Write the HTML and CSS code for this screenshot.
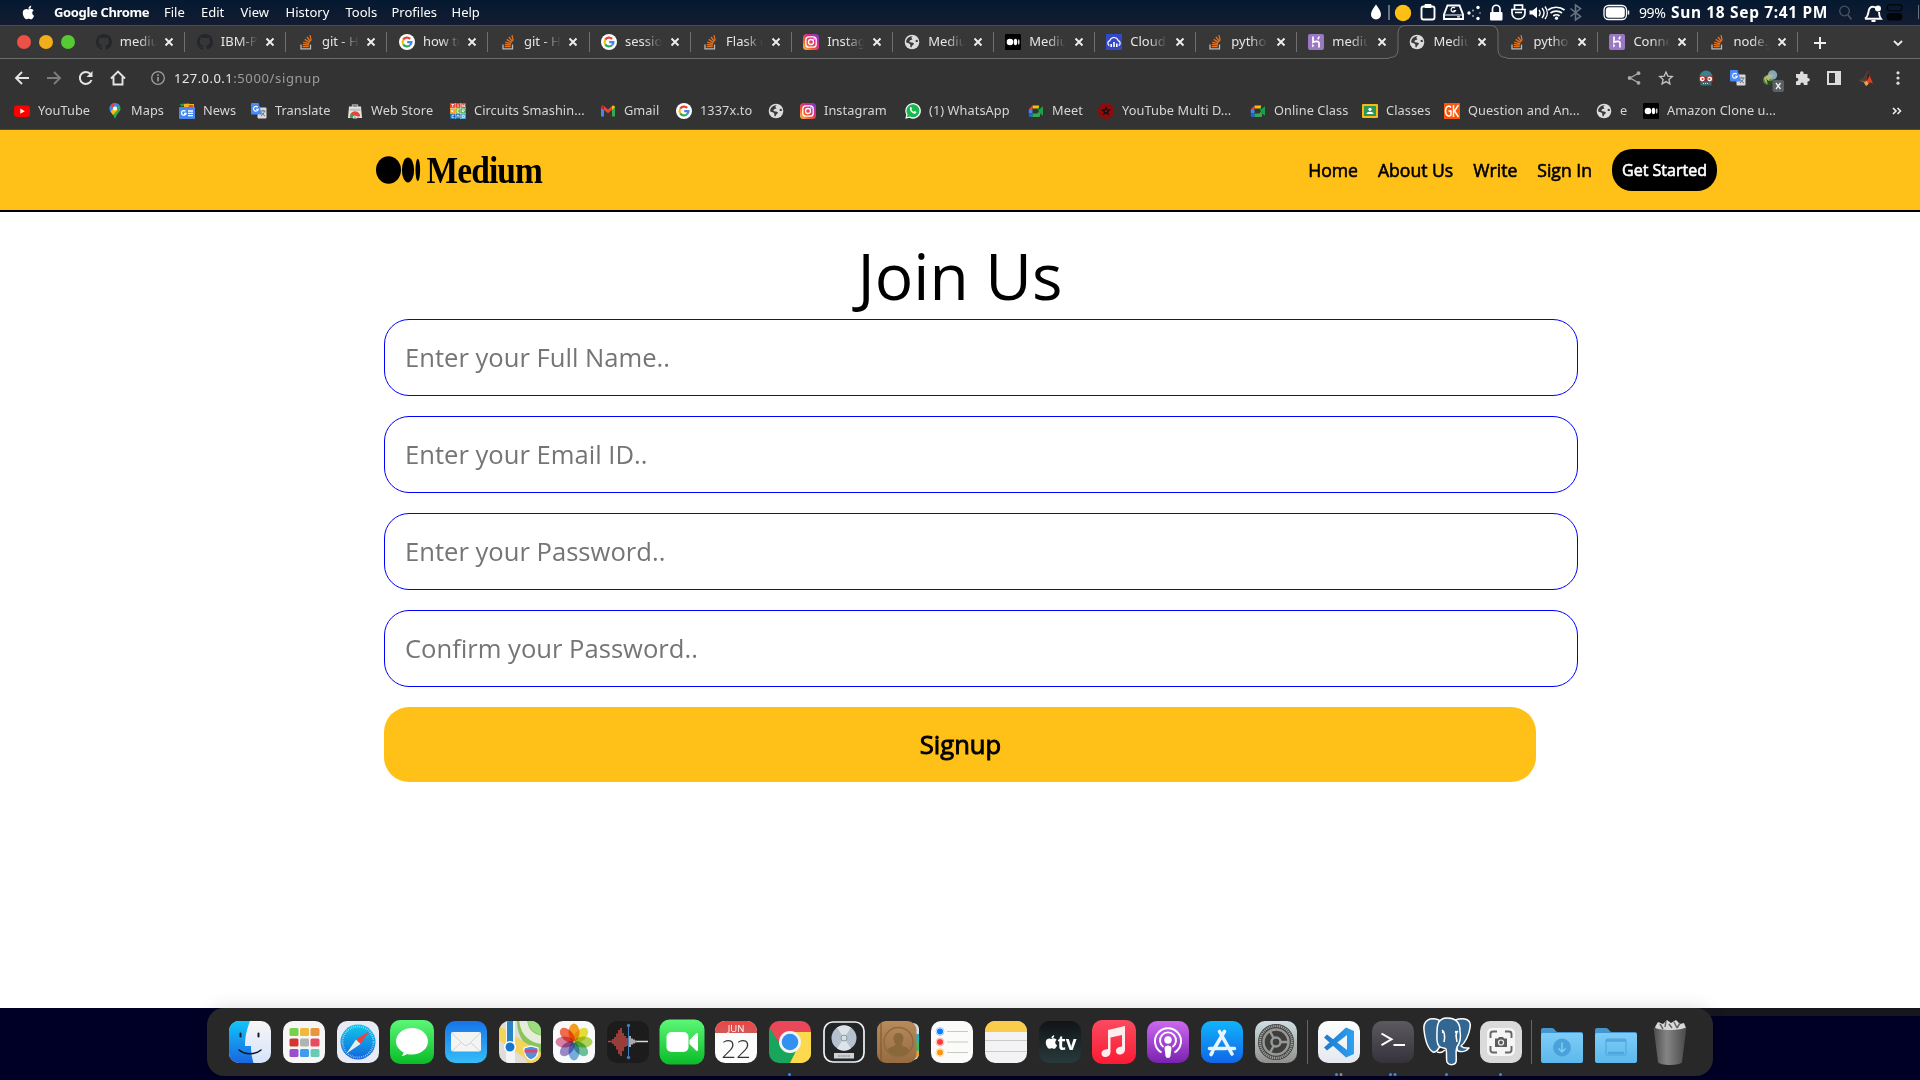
FILE: index.html
```html
<!DOCTYPE html>
<html lang="en">
<head>
<meta charset="utf-8">
<title>Medium</title>
<link rel="stylesheet" href="styles.css">
</head>
<body>
<svg class="defs" width="0" height="0" aria-hidden="true">
  <defs>
    <linearGradient id="gGreen" x2="0" y2="1"><stop offset="0" stop-color="#5cf777"/><stop offset="1" stop-color="#09bc28"/></linearGradient>
    <linearGradient id="gWhite" x2="0" y2="1"><stop offset="0" stop-color="#ffffff"/><stop offset="1" stop-color="#e4e8ee"/></linearGradient>
    <linearGradient id="gMail" x2="0" y2="1"><stop offset="0" stop-color="#1674e8"/><stop offset="1" stop-color="#36bdf8"/></linearGradient>
    <linearGradient id="gSaf" x2="0" y2="1"><stop offset="0" stop-color="#0fc8ea"/><stop offset="1" stop-color="#1465dc"/></linearGradient>
    <linearGradient id="gFind" x2="0" y2="1"><stop offset="0" stop-color="#12c4f8"/><stop offset="1" stop-color="#1a66e0"/></linearGradient>
    <linearGradient id="gFace" x2="0" y2="1"><stop offset="0" stop-color="#f8f5f6"/><stop offset="1" stop-color="#d4e4fb"/></linearGradient>
    <linearGradient id="gMusic" x2="0" y2="1"><stop offset="0" stop-color="#fb4a60"/><stop offset="1" stop-color="#fa1b34"/></linearGradient>
    <linearGradient id="gPod" x2="0" y2="1"><stop offset="0" stop-color="#cc68f0"/><stop offset="1" stop-color="#7a22b0"/></linearGradient>
    <linearGradient id="gStore" x2="0" y2="1"><stop offset="0" stop-color="#10b4fc"/><stop offset="1" stop-color="#1066e8"/></linearGradient>
    <linearGradient id="gTv" x2="0" y2="1"><stop offset="0" stop-color="#101416"/><stop offset="1" stop-color="#283a3c"/></linearGradient>
    <linearGradient id="gTerm" x2="0" y2="1"><stop offset="0" stop-color="#5c5960"/><stop offset="1" stop-color="#35323b"/></linearGradient>
    <linearGradient id="gSet" x2="0" y2="1"><stop offset="0" stop-color="#cfdfe4"/><stop offset="1" stop-color="#90908c"/></linearGradient>
    <linearGradient id="gCon" x2="0" y2="1"><stop offset="0" stop-color="#b88a5c"/><stop offset="1" stop-color="#966c40"/></linearGradient>
    <linearGradient id="gCal" x2="0" y2="1"><stop offset="0" stop-color="#f04444"/><stop offset="1" stop-color="#cf5a58"/></linearGradient>
    <linearGradient id="gFold" x2="0" y2="1"><stop offset="0" stop-color="#7ecdf8"/><stop offset="1" stop-color="#5cb8ec"/></linearGradient>
    <linearGradient id="gTrash"><stop offset="0" stop-color="#4c4c4c"/><stop offset=".4" stop-color="#858585"/><stop offset="1" stop-color="#484848"/></linearGradient>
    <linearGradient id="gCode"><stop offset="0" stop-color="#1d7ad0"/><stop offset="1" stop-color="#2fa0f0"/></linearGradient>
    <linearGradient id="gInsta" x1="0" y1="1" x2="1" y2="0"><stop offset="0" stop-color="#fdc94c"/><stop offset=".35" stop-color="#f6542f"/><stop offset=".65" stop-color="#cf2c8e"/><stop offset="1" stop-color="#6a3fd0"/></linearGradient>
    <clipPath id="round"><rect width="42" height="42" rx="10"/></clipPath>
  </defs>
  <symbol id="apple" viewBox="0 0 24 24"><path d="M18.7 12.7c0-2.5 2-3.700 2.100-3.800-1.200-1.700-3-1.900-3.600-2-1.500-.2-3 .9-3.800.9s-2-.9-3.200-.9c-1.700 0-3.200 1-4.100 2.400-1.700 3-.4 7.500 1.300 9.900.8 1.200 1.800 2.500 3.100 2.500 1.200-.1 1.700-.8 3.200-.8s1.900.8 3.200.8c1.400 0 2.200-1.200 3-2.400.9-1.400 1.300-2.700 1.300-2.800-.1 0-2.500-1-2.500-3.800zM16.200 5.500c.7-.8 1.200-2 1-3.200-1 0-2.200.7-2.900 1.500-.6.700-1.200 1.900-1 3 1.100.1 2.200-.5 2.900-1.300z" fill="currentColor"/></symbol>
  <symbol id="github" viewBox="0 0 16 16"><path d="M8 0C3.580 0 0 3.580 0 8c0 3.540 2.290 6.530 5.470 7.590.4.070.55-.17.55-.38v-1.490c-2.010.37-2.690-.49-2.690-.94-.5-.94-1.100-1.200-1.100-1.200-.7-.5.1-.5.1-.5.8.1 1.200.8 1.200.8.72 1.210 1.870.87 2.330.66.070-.52.28-.87.51-1.070-1.780-.2-3.640-.89-3.640-3.950 0-.87.31-1.590.82-2.150-.08-.2-.36-1.020.08-2.120 0 0 .67-.21 2.200.82a7.600 7.600 0 014 0c1.530-1.040 2.200-.82 2.200-.82.44 1.100.16 1.920.08 2.120.51.560.82 1.270.82 2.150 0 3.070-1.870 3.750-3.650 3.950.29.250.54.730.54 1.480v2.190c0 .21.150.46.550.38A8.010 8.010 0 0016 8c0-4.420-3.580-8-8-8z" fill="#23272c"/></symbol>
  <symbol id="so" viewBox="0 0 16 16"><path d="M3 10.500v4.300h9.500v-4.300" fill="none" stroke="#b8bbc0" stroke-width="1.300"/><path d="M4.700 12.700h6M4.800 10.500l6 .6M5.300 8.100l5.700 1.700M6.700 5.400l5 3.200M9 3l3.500 4.700M12 1.200l1.200 5.500" stroke="#e8711a" stroke-width="1.300"/></symbol>
  <symbol id="google" viewBox="0 0 16 16"><circle cx="8" cy="8" r="8" fill="#fff"/><g fill="none" stroke-width="2.200"><path d="M4.200 5.700A4.500 4.500 0 0111.200 4.900" stroke="#ea4335"/><path d="M4.200 10.300a4.500 4.500 0 010-4.600" stroke="#fbbc05"/><path d="M11 11.300a4.500 4.500 0 01-6.800-1" stroke="#34a853"/><path d="M8.200 8.100h4.200A4.600 4.600 0 0111 11.300" stroke="#4285f4"/></g></symbol>
  <symbol id="insta" viewBox="0 0 16 16"><rect width="16" height="16" rx="3.500" fill="url(#gInsta)"/><g fill="none" stroke="#fff" stroke-width="1.300"><rect x="2.800" y="2.800" width="10.400" height="10.400" rx="3"/><circle cx="8" cy="8" r="2.500"/></g><circle cx="11" cy="5" r=".8" fill="#fff"/></symbol>
  <symbol id="globe" viewBox="0 0 16 16"><circle cx="8" cy="8" r="7.300" fill="#dcdcdc"/><path d="M8.800 2.300C7 3 7 4.600 8.600 5.200 7.500 6.200 5.600 5.800 5.500 7.400c.3 1.400 3.500.6 4.300 1.800.4 1.300-1.200 1.600-1.600 2.600l-.8 1.800c-1-.4-1.200-1-1-2.200C6.500 9.800 4.500 9.300 2.200 8.600c-.3-2 .8-4 2.300-5.100 1.300-.9 2.800-1.300 4.300-1.200zM13.500 5.800c-1.300-.2-2.400.6-1.900 1.700.4.700 1.500.7 2.200.5.100-.8 0-1.500-.3-2.200z" fill="#3a3a3a"/></symbol>
  <symbol id="medium" viewBox="0 0 16 16"><rect width="16" height="16" rx="1" fill="#000"/><circle cx="5" cy="8" r="3.300" fill="#fff"/><ellipse cx="10.500" cy="8" rx="1.700" ry="3.200" fill="#fff"/><ellipse cx="13.700" cy="8" rx=".9" ry="2.800" fill="#ccc"/></symbol>
  <symbol id="cloud" viewBox="0 0 16 16"><rect width="16" height="16" fill="#3448c5"/><path d="M3.300 11.600a2.700 2.700 0 01.5-5 4.400 4.400 0 018.400 0 2.700 2.700 0 01.5 5" fill="none" stroke="#fff" stroke-width="1.200"/><path d="M5.200 13V10M8 13V8M10.800 13V9.500" stroke="#fff" stroke-width="1.600"/></symbol>
  <symbol id="heroku" viewBox="0 0 16 16"><rect width="16" height="16" rx="2" fill="#9a78c4"/><path d="M5 2.500v5.800c2.500-1.200 6-1.600 6 .8v4.400M11 2.500c0 1.300-.5 2-1.200 2.800" fill="none" stroke="#fff" stroke-width="1.700"/><path d="M4.200 9.800l2.200 1.900-2.200 1.900z" fill="#fff"/></symbol>
  <symbol id="close" viewBox="0 0 10 10"><path d="M1.500 1.500l7 7M8.500 1.500l-7 7" stroke="#eee" stroke-width="1.900"/></symbol>
  <symbol id="trans" viewBox="0 0 16 16"><rect x="6.500" y="4.500" width="9" height="11" rx="1" fill="#dadada"/><path d="M9.500 8h5M12 6.800V8M13.500 8c-.5 2.500-2 4-3.500 5M10.500 9.500c.8 1.500 2 2.700 3.500 3.500" stroke="#69787f" fill="none"/><path d="M1 0h6.500l3.500 11.500H1a1 1 0 01-1-1V1a1 1 0 011-1z" fill="#4a8af4"/><path d="M6.800 4.200A2.400 2.400 0 107.300 6.200H5" stroke="#fff" fill="none" stroke-width="1.100"/></symbol>
  <symbol id="meet" viewBox="0 0 16 16"><path d="M4.500 2.500H11v3H4.500z" fill="#fbbc04"/><path d="M.8 6.200l3.700-3.700v3.700z" fill="#ea4335"/><path d="M.8 6.200h3.700v4H.8z" fill="#4285f4"/><path d="M.8 10.200h3.700V14H1.800a1 1 0 01-1-1z" fill="#1967d2"/><path d="M4.500 10.500H9L12 8v5a1 1 0 01-1 1H4.500z" fill="#34a853"/><path d="M10 5.500V4l1 1v1.500l4-3.200v9.500l-4-3z" fill="#18a245"/></symbol>
</svg>

<header class="menubar">
  <nav class="menus">
    <svg class="apple"><use href="#apple"/></svg>
    <b>Google Chrome</b><span>File</span><span>Edit</span><span>View</span><span>History</span><span>Tools</span><span>Profiles</span><span>Help</span>
  </nav>
  <div class="tray">
    <svg viewBox="0 0 250 24" class="trayicons">
      <path d="M11 4.500c2.300 3.500 5 6.500 5 10a5 5 0 01-10 0c0-3.500 2.700-6.500 5-10z" fill="#fff"/>
      <path d="M24 5v15" stroke="#c8ccd2"/><circle cx="38" cy="13" r="8.200" fill="#fdbf13"/>
      <g fill="none" stroke="#fff" stroke-width="1.900"><rect x="56.500" y="6.500" width="13" height="13" rx="2"/><rect x="59.500" y="4" width="7" height="4" rx="1" fill="#fff" stroke="none"/>
      <path d="M82.500 5.500h12l3.500 9v4.500h-19v-4.500z"/><path d="M79.500 15h18M92 16.800h3M90 8a2.300 2.300 0 10.500 2.600h-2" stroke-width="1.200"/></g>
      <g fill="#fff"><circle cx="104" cy="13" r="1.700"/><circle cx="108" cy="10.500" r=".9" opacity=".7"/><circle cx="113" cy="7.500" r="1.700"/><circle cx="108" cy="16" r=".9" opacity=".7"/><circle cx="113" cy="18.500" r="1.700"/><circle cx="115" cy="13" r=".9" opacity=".5"/>
      <rect x="125" y="12" width="12.500" height="8.500" rx="1"/></g>
      <g fill="none" stroke="#fff" stroke-width="1.700"><path d="M127.500 12V9a3.500 3.500 0 017.500 0v3M149.500 9V5.200h8V9M147 9.500h13v3.500a6 6 0 01-6 6h-1a6 6 0 01-6-6zM150 12.500h7"/>
      <path d="M174 10c1.500 2 1.500 4 0 6M177 8c2.500 3 2.500 7 0 10M180 6.500c3 4 3 9 0 12.500" stroke-width="1.400"/><path d="M183 10a11.500 9 0 0116.500 0M185.500 13a8 6 0 0111.500 0M188.300 16a4.200 3.500 0 016.200 0"/></g>
      <path d="M164.500 10.500h3l4.500-3.500v11l-4.500-3.500h-3z" fill="#fff"/><circle cx="191.500" cy="18.200" r="1.600" fill="#fff"/>
      <path d="M205.500 8.500l10 8-5 3.500V5l5 3.500-10 8" fill="none" stroke="#687482" stroke-width="1.600"/>
    </svg>
    <svg viewBox="0 0 28 24" class="battery"><rect x="1" y="5.500" width="22.500" height="14" rx="4.500" fill="none" stroke="#fff" stroke-width="1.300"/><rect x="2.800" y="7.300" width="19" height="10.400" rx="3" fill="#fff"/><path d="M25.500 10.500v4" stroke="#fff" stroke-width="1.500"/></svg>
    <span class="pct">99%</span>
    <b class="clock">Sun 18 Sep 7:41 PM</b>
    <svg viewBox="0 0 88 24" class="trayend"><circle cx="12.500" cy="11" r="4.800" fill="none" stroke="#4b5664" stroke-width="1.300"/><path d="M16 15l3.500 4.500" stroke="#4b5664" stroke-width="1.500"/><path d="M33 18.800c2.500-2 3-3.500 3.500-7 .4-3 2-5 4.500-5s3 1 3.400 2M47 12c0 3 .5 5 2 6.800H33M39.500 21h4" fill="none" stroke="#fff" stroke-width="1.900"/><circle cx="46" cy="8.500" r="3" fill="#fff"/><rect x="55" y="4.700" width="15" height="6" rx="3" fill="none" stroke="#04080f" stroke-width="1.500"/><rect x="54.500" y="13" width="16" height="7.500" rx="3.700" fill="#02050a"/><path d="M86.500 5v14" stroke="#68727e"/></svg>
  </div>
</header>

<section class="tabstrip">
  <div class="lights"><i class="red"></i><i class="amber"></i><i class="green"></i></div>
  <div class="tabs">
    <div class="tab"><svg><use href="#github"/></svg><span>medium</span><svg class="x"><use href="#close"/></svg></div>
    <div class="tab"><svg><use href="#github"/></svg><span>IBM-Pr</span><svg class="x"><use href="#close"/></svg></div>
    <div class="tab"><svg><use href="#so"/></svg><span>git - Ho</span><svg class="x"><use href="#close"/></svg></div>
    <div class="tab"><svg><use href="#google"/></svg><span>how to</span><svg class="x"><use href="#close"/></svg></div>
    <div class="tab"><svg><use href="#so"/></svg><span>git - Ho</span><svg class="x"><use href="#close"/></svg></div>
    <div class="tab"><svg><use href="#google"/></svg><span>session</span><svg class="x"><use href="#close"/></svg></div>
    <div class="tab"><svg><use href="#so"/></svg><span>Flask c</span><svg class="x"><use href="#close"/></svg></div>
    <div class="tab"><svg><use href="#insta"/></svg><span>Instagr</span><svg class="x"><use href="#close"/></svg></div>
    <div class="tab"><svg><use href="#globe"/></svg><span>Medium</span><svg class="x"><use href="#close"/></svg></div>
    <div class="tab"><svg><use href="#medium"/></svg><span>Medium</span><svg class="x"><use href="#close"/></svg></div>
    <div class="tab"><svg><use href="#cloud"/></svg><span>Cloudin</span><svg class="x"><use href="#close"/></svg></div>
    <div class="tab"><svg><use href="#so"/></svg><span>python</span><svg class="x"><use href="#close"/></svg></div>
    <div class="tab before"><svg><use href="#heroku"/></svg><span>medium</span><svg class="x"><use href="#close"/></svg></div>
    <div class="tab active"><svg class="shape" viewBox="0 0 118 34"><path d="M0 34V32.500h1q8 0 8-8V8.500q0-8 8-8h84q8 0 8 8v16q0 8 8 8h1V34z" fill="#333"/><path d="M0 32.500h1q8 0 8-8V8.500q0-8 8-8h84q8 0 8 8v16q0 8 8 8h1" fill="none" stroke="#6d6d6d"/></svg><svg><use href="#globe"/></svg><span>Medium</span><svg class="x"><use href="#close"/></svg></div>
    <div class="tab"><svg><use href="#so"/></svg><span>python</span><svg class="x"><use href="#close"/></svg></div>
    <div class="tab"><svg><use href="#heroku"/></svg><span>Connec</span><svg class="x"><use href="#close"/></svg></div>
    <div class="tab"><svg><use href="#so"/></svg><span>node.js</span><svg class="x"><use href="#close"/></svg></div>
  </div>
  <svg class="plus" viewBox="0 0 14 14"><path d="M7 1v12M1 7h12" stroke="#eee" stroke-width="2"/></svg>
  <svg class="chev" viewBox="0 0 10 10"><path d="M1 3l4 4 4-4" fill="none" stroke="#eee" stroke-width="1.800"/></svg>
</section>

<section class="toolbar">
  <div class="navicons">
    <svg viewBox="0 0 16 16"><path d="M15 8H2M8 2L2 8l6 6" fill="none" stroke="#e4e4e4" stroke-width="1.900"/></svg>
    <svg viewBox="0 0 16 16"><path d="M1 8h13M8 2l6 6-6 6" fill="none" stroke="#7c7c7c" stroke-width="1.900"/></svg>
    <svg viewBox="0 0 16 16"><path d="M13.500 10A6 6 0 1112.600 4.200" fill="none" stroke="#e4e4e4" stroke-width="2"/><path d="M14.500 1v6h-6z" fill="#e4e4e4"/></svg>
    <svg viewBox="0 0 16 16"><path d="M1 8.500L8 1.500l7 7M3.500 7v7.500h9V7" fill="none" stroke="#e4e4e4" stroke-width="1.900"/></svg>
  </div>
  <svg class="info" viewBox="0 0 16 16"><circle cx="8" cy="8" r="6.300" fill="none" stroke="#9aa0a6" stroke-width="1.300"/><path d="M8 7v4.500M8 4.300V6" stroke="#9aa0a6" stroke-width="1.600"/></svg>
  <p class="url"><span>127.0.0.1</span>:5000/signup</p>
  <div class="exts">
    <svg viewBox="0 0 16 16"><path d="M13 3L4 8l9 5" fill="none" stroke="#a9a9a9" stroke-width="1.300"/><g fill="#a9a9a9"><circle cx="12.500" cy="3.200" r="1.900"/><circle cx="3.600" cy="8" r="1.900"/><circle cx="12.500" cy="12.800" r="1.900"/></g></svg>
    <svg viewBox="0 0 16 16"><path d="M8 2l1.800 4.100 4.500.4-3.400 3 1 4.400L8 11.600l-3.900 2.300 1-4.400-3.400-3 4.500-.4z" fill="none" stroke="#c4c4c4" stroke-width="1.300"/></svg>
    <span></span>
    <svg viewBox="0 0 16 16"><path d="M1.500 7.500a6.500 7 0 0113 0z" fill="#3b8290"/><path d="M2.500 11h11v4.500h-11z" fill="#376f7a"/><circle cx="4.300" cy="9" r="3" fill="#fff" stroke="#a22c22" stroke-width="1.200"/><circle cx="11.700" cy="9" r="3" fill="#fff" stroke="#a22c22" stroke-width="1.200"/><circle cx="4.600" cy="9" r="1.100" fill="#d8382c"/><circle cx="11.400" cy="9" r="1.100" fill="#d8382c"/><path d="M5 13.500h6" stroke="#ddd" stroke-dasharray="1 1"/></svg>
    <svg><use href="#trans"/></svg>
    <svg class="idm" viewBox="0 0 22 22"><circle cx="6" cy="10" r="5" fill="#55803f"/><circle cx="10.500" cy="5" r="4.700" fill="#85a6b8"/><path d="M2 8c3-3 7-5 10-3l-5 5 2 4c-3 1-6-1-7-6z" fill="#b4bd76"/><path d="M4 8c2 4 5 4 8 2v4l-6 1z" fill="#1f4a24"/><rect x="10.500" y="10" width="11.500" height="12" rx="2" fill="#5c6064"/><path d="M14 13l4.500 6M18.500 13L14 19" stroke="#eee" stroke-width="1.300"/></svg>
    <svg viewBox="0 0 16 16"><path d="M2 4h4V3a1.800 1.800 0 013.600 0v1h3.900v4H14a1.800 1.800 0 010 3.600h-.5V15H9.800v-.8a1.700 1.700 0 00-3.400 0v.8H2v-3.800h.6a1.700 1.700 0 000-3.400H2z" fill="#dcdcdc"/></svg>
    <svg viewBox="0 0 16 16"><path d="M1 1h14v14H1zM3 3v10h6V3z" fill="#dcdcdc" fill-rule="evenodd"/></svg>
    <svg viewBox="0 0 16 16"><path d="M1 10.500l5-3L10 .5l2 6 3 7-3-1-4 3.500-2-3.500z" fill="#d8421f"/><path d="M1 10.500l5-3L10 .5 7.500 11z" fill="#2a4550"/><path d="M10 .5l1.500 5L10 9 8 11z" fill="#4a1a1a"/><path d="M6 12.500l3-1.500 1.500 3L8 16z" fill="#f4a836"/></svg>
    <svg viewBox="0 0 16 16"><g fill="#dcdcdc"><circle cx="8" cy="2.800" r="1.600"/><circle cx="8" cy="8" r="1.600"/><circle cx="8" cy="13.200" r="1.600"/></g></svg>
  </div>
</section>

<section class="bookmarks">
  <div class="marks">
    <a><svg viewBox="0 0 16 16"><rect y="2.500" width="16" height="11.500" rx="3" fill="#f00"/><path d="M6.300 5.600v5.200l4.500-2.600z" fill="#fff"/></svg>YouTube</a>
    <a><svg viewBox="0 0 16 16"><path d="M8 0a5.500 5.500 0 015.500 5.500C13.500 9 10 10 8 16 6 10 2.500 9 2.500 5.500A5.500 5.500 0 018 0z" fill="#34a853"/><path d="M3 3.500L8 0l4 1.500L4.500 9.500C3 8 2 6 3 3.500z" fill="#4285f4"/><path d="M3.500 2.200A5.500 5.500 0 018 0L6 5z" fill="#ea4335"/><path d="M3.500 8.500L9 3l1.500 4-4.500 5z" fill="#fbbc04"/><circle cx="8" cy="5.500" r="2" fill="#fff"/></svg>Maps</a>
    <a><svg viewBox="0 0 16 16"><path d="M2 3.500L1 1l9-1 1 2z" fill="#1e9c4c"/><path d="M5 1h10v4H5z" fill="#f2b51d"/><path d="M10 2l4 0 .5 4H9z" fill="#e84435"/><rect y="4" width="16" height="12" rx="1" fill="#4688f1"/><path d="M6.500 8.300A2.300 2.300 0 107 10.500H5M9 8h5M9 10.300h5M9 12.600h5" fill="none" stroke="#fff" stroke-width="1.300"/></svg>News</a>
    <a><svg><use href="#trans"/></svg>Translate</a>
    <a><svg viewBox="0 0 16 16"><path d="M5.500 4V2h5v2" fill="none" stroke="#aaa" stroke-width="1.300"/><path d="M2 3.500h12l1 11.500H1z" fill="#e6e6e6"/><path d="M2.500 5.500h11v2.500h-11z" fill="#c4c4c4"/><path d="M2.800 13.500a5.200 5.200 0 0110.400 0z" fill="#ea4335"/><path d="M2.800 13l2-3 2.500 5h-4z" fill="#34a853"/><path d="M13.200 13l-1.500 2H9z" fill="#fbbc04"/><path d="M6 15a2 2 0 014 0z" fill="#4285f4" stroke="#fff" stroke-width=".8"/></svg>Web Store</a>
    <a><svg viewBox="0 0 16 16"><path d="M0 0h16v5H0z" fill="#e8402a"/><path d="M0 5h5.300v5.500H0z" fill="#f39a1c"/><path d="M5.300 5h5.400v5.500H5.300z" fill="#7dbb2e"/><path d="M10.700 5H16v5.500h-5.300z" fill="#2ba84a"/><path d="M0 10.500h10.700V16H0z" fill="#1763a8"/><path d="M10.700 10.500H16V16h-5.300z" fill="#2aa0d8"/><path d="M5.300 0v16M10.700 0v16M0 5.200h16M0 10.600h16" stroke="#fff" stroke-width=".5"/><path d="M1.500 1.500h2.500M2.700 1.500v2.500M8 1.300v2.700M12.200 4V1.500L14.300 4V1.300M1.700 6.700v2.600M3.700 6.700L2 8l1.700 1.300M9.200 6.700H7.200v2.600h2M12.300 9.300V6.700h2v1.300l-2 .3 2 1M4 12.200H2v2.500h2M7 14.800v-2.600h2v2.600M12.300 12.200h2v2.500h-2z" stroke="#fff" fill="none" stroke-width=".8"/></svg>Circuits Smashin...</a>
    <a><svg viewBox="0 0 16 16"><path d="M1 4.500v9h3V7z" fill="#4285f4"/><path d="M12 7v6.500h3v-9z" fill="#34a853"/><path d="M1 4.500A1.800 1.800 0 014 3l4 3.500L12 3v4l-4 3.300L4 7z" fill="#ea4335"/><path d="M12 3a1.800 1.800 0 013 1.500L12 7z" fill="#fbbc04"/><path d="M1 4.500L4 7V3.200A1.800 1.800 0 001 4.500z" fill="#c5221f"/></svg>Gmail</a>
    <a><svg><use href="#google"/></svg>1337x.to</a>
    <a><svg><use href="#globe"/></svg></a>
    <a><svg><use href="#insta"/></svg>Instagram</a>
    <a><svg viewBox="0 0 16 16"><path d="M.3 15.700l1-4A7.800 7.800 0 114.500 14.800z" fill="#fff"/><path d="M1.800 14.200l.8-2.700A6.500 6.500 0 114.800 13.500z" fill="#17b84e"/><path d="M5.300 4.300c1-.8 1.400.8 1.700 1.500-.6 1-.7 1 .3 2s1.400 1.200 2.200.3c1 .3 2.500.8 1.700 1.900-2 2.500-8-2.500-5.900-5.700z" fill="#fff"/></svg>(1) WhatsApp</a>
    <a><svg><use href="#meet"/></svg>Meet</a>
    <a><svg viewBox="0 0 16 16"><circle cx="8" cy="8" r="8" fill="#8e0b0b"/><path d="M8 3l1.400 3.300 3.500.3-2.700 2.300.8 3.500L8 10.500l-3 1.900.8-3.500-2.700-2.300 3.500-.3z" fill="#111"/><circle cx="8" cy="8" r="1.200" fill="#801515"/></svg>YouTube Multi D...</a>
    <a><svg><use href="#meet"/></svg>Online Class</a>
    <a><svg viewBox="0 0 16 16"><rect y="1" width="16" height="14" rx="1" fill="#f5ba15"/><rect x="2" y="3" width="12" height="10" fill="#2f9457"/><circle cx="8" cy="6.300" r="1.600" fill="#fff"/><path d="M4.500 11c0-3 7-3 7 0z" fill="#fff"/></svg>Classes</a>
    <a><svg viewBox="0 0 16 16"><rect width="16" height="16" fill="#fb5607"/><path d="M7 4.500C5.500 2 1.500 3 1.500 8s4 6 5.500 4V8H4.500M9.500 2v12M14.500 2L10.500 8l4 6" fill="none" stroke="#fff" stroke-width="1.500"/></svg>Question and An...</a>
    <a><svg><use href="#globe"/></svg>e</a>
    <a><svg><use href="#medium"/></svg>Amazon Clone u...</a>
  </div>
  <svg class="more" viewBox="0 0 10 8"><path d="M1 1l3 3-3 3M5.500 1l3 3-3 3" fill="none" stroke="#eee" stroke-width="1.600"/></svg>
</section>

<main class="page">
  <div class="sitebar">
    <svg class="logo" viewBox="0 0 170 30"><ellipse cx="12.500" cy="15" rx="12.500" ry="13.700"/><ellipse cx="32" cy="15" rx="6.100" ry="12.500"/><ellipse cx="41.800" cy="15" rx="2.300" ry="11.200"/><text x="50.500" y="27.500" textLength="115.500" lengthAdjust="spacingAndGlyphs">Medium</text></svg>
    <nav class="sitenav"><a>Home</a><a>About Us</a><a>Write</a><a>Sign In</a><a class="cta">Get Started</a></nav>
  </div>
  <h1>Join Us</h1>
  <form class="form">
    <input type="text" placeholder="Enter your Full Name..">
    <input type="text" placeholder="Enter your Email ID..">
    <input type="text" placeholder="Enter your Password..">
    <input type="text" placeholder="Confirm your Password..">
    <button type="button">Signup</button>
  </form>
</main>

<footer class="desk">
  <div class="dock">
    <svg viewBox="0 0 42 42"><g clip-path="url(#round)"><path d="M0 0h42v42H0z" fill="url(#gFace)"/><path d="M0 0h21c-3 8-5 15-5 25h6c0 7 1 12 2.500 17H0z" fill="url(#gFind)"/></g><path d="M11.500 12.500v3M29.500 12.500v3" stroke="#122" stroke-width="2" stroke-linecap="round"/><path d="M10 29c6 5 16 5 22 0" fill="none" stroke="#111" stroke-width="1.500" stroke-linecap="round"/></svg>
    <svg viewBox="0 0 42 42"><rect width="42" height="42" rx="10" fill="#f6f6f4"/><g><rect x="6.500" y="7" width="9" height="8" rx="1.500" fill="#77cf4c"/><rect x="17" y="7" width="9" height="8" rx="1.500" fill="#efb93c"/><rect x="27.500" y="7" width="9" height="8" rx="1.500" fill="#ea953c"/><rect x="6.500" y="17.500" width="9" height="8" rx="1.500" fill="#d6352f"/><rect x="17" y="17.500" width="9" height="8" rx="1.500" fill="#aeb4b6"/><rect x="27.500" y="17.500" width="9" height="8" rx="1.500" fill="#ea4a62"/><rect x="6.500" y="28" width="9" height="8" rx="1.500" fill="#9a4ecc"/><rect x="17" y="28" width="9" height="8" rx="1.500" fill="#3f9af0"/><rect x="27.500" y="28" width="9" height="8" rx="1.500" fill="#6acbb4"/></g></svg>
    <svg viewBox="0 0 42 42"><rect width="42" height="42" rx="10" fill="#e8ebf5"/><circle cx="21" cy="21" r="17.500" fill="url(#gSaf)"/><circle cx="21" cy="21" r="15.500" fill="none" stroke="#cfeeff" stroke-width="1.800" stroke-dasharray=".6 1.400"/><path d="M32.500 10L23.500 23 19 18.500z" fill="#f0413c"/><path d="M9.500 32.500L19 18.500l4.500 4.500z" fill="#e8edf0"/></svg>
    <svg viewBox="0 0 42 42"><rect x="-1" y="-1" width="44" height="44" rx="10" fill="url(#gGreen)"/><path d="M21 7c9 0 16 6 16 13.300S30 33.500 21 33.500c-2 0-3.500-.2-5-.6-1.300 1-3 1.800-5.500 2 1.300-1.200 2-2.300 2-3.500C8 29 5 25 5 20.300 5 13 12 7 21 7z" fill="#fff"/></svg>
    <svg viewBox="0 0 42 42"><rect width="42" height="42" rx="10" fill="url(#gMail)"/><rect x="6" y="11" width="30" height="19.500" rx="2" fill="#f4f4f2"/><path d="M6.500 12l11.500 11c2 2 4 2 6 0l11.500-11M7 30l9.500-8.500M35 30l-9.500-8.500" fill="none" stroke="#d2d4d6"/></svg>
    <svg viewBox="0 0 42 42"><g clip-path="url(#round)"><path d="M0 0h42v42H0z" fill="#e0dcd6"/><path d="M18 0h24v34C30 30 18 18 18 0z" fill="#8cc45c"/><path d="M24-4c0 17 11 23 22 23" fill="none" stroke="#e6ecdc" stroke-width="8"/><path d="M29-2a16 15 0 0016 16V-2z" fill="#9bdc7e"/><path d="M-2 4l4 2 42 27v12L30 44l-4-7L-2 18z" fill="#f3d55c"/><path d="M7 0h9v42H7z" fill="#f1f4f4"/><path d="M8 0h6v24H8z" fill="#2884c2"/></g><circle cx="11" cy="26" r="6" fill="#fff"/><circle cx="11" cy="26" r="4.500" fill="#1776d1"/><path d="M25 27l7-2 7 2c0 8-2 10-7 12-5-2-7-5-7-12z" fill="#4f91da" stroke="#fff" stroke-width="1.300"/><path d="M25.500 28.500h13v3h-13z" fill="#e04270"/></svg>
    <svg viewBox="0 0 42 42"><rect width="42" height="42" rx="10" fill="#f8f9fb"/><g class="petals"><ellipse cx="21" cy="11.500" rx="5.500" ry="9" fill="#f9a11e"/><ellipse cx="21" cy="11.500" rx="5.500" ry="9" fill="#ece238" transform="rotate(45 21 21)"/><ellipse cx="21" cy="11.500" rx="5.500" ry="9" fill="#b4d858" transform="rotate(90 21 21)"/><ellipse cx="21" cy="11.500" rx="5.500" ry="9" fill="#74c49c" transform="rotate(135 21 21)"/><ellipse cx="21" cy="11.500" rx="5.500" ry="9" fill="#78b0e2" transform="rotate(180 21 21)"/><ellipse cx="21" cy="11.500" rx="5.500" ry="9" fill="#a08cca" transform="rotate(225 21 21)"/><ellipse cx="21" cy="11.500" rx="5.500" ry="9" fill="#de82a6" transform="rotate(270 21 21)"/><ellipse cx="21" cy="11.500" rx="5.500" ry="9" fill="#f6704e" transform="rotate(315 21 21)"/></g></svg>
    <svg viewBox="0 0 42 42"><rect width="42" height="42" rx="10" fill="#1c1c1c"/><path d="M1 20.500h4M6 18v5M8 16v9M10 12.500v16M12 9v24M14 7v28M16 12v18M18 15v11M20 17v8" stroke="#b04440" stroke-width="1.700"/><path d="M23 15v11M25 17.500v6M27 18.500v4M29 19.500v2M30 20.500h11" stroke="#d8d8d8" stroke-width="1.500"/><path d="M21.500 4v33" stroke="#407dc0"/><circle cx="21.500" cy="4.500" r="1.700" fill="#407dc0"/><circle cx="21.500" cy="36.500" r="1.700" fill="#407dc0"/></svg>
    <svg viewBox="0 0 42 42"><rect x="-1.500" y="-1.500" width="45" height="45" rx="10" fill="url(#gGreen)"/><rect x="5.500" y="11" width="22" height="20" rx="5" fill="#fff"/><path d="M28.500 19l6.500-6.500q2-1.500 2 1v15q0 2.500-2 1L28.500 23z" fill="#fff"/></svg>
    <svg viewBox="0 0 42 42"><g clip-path="url(#round)"><path d="M0 0h42v42H0z" fill="#fcfcfc"/><path d="M0 0h42v12H0z" fill="url(#gCal)"/></g><text x="21" y="10.500" class="cal-m">JUN</text><text x="21" y="37" class="cal-d">22</text></svg>
    <svg viewBox="0 0 42 42"><g clip-path="url(#round)"><path d="M0 0h42v11H21L12 25 0 8z" fill="#ea4858"/><path d="M0 6l12 19 12 5-4 12H0z" fill="#18a55c"/><path d="M21 11h21v31H21l9-17z" fill="#fdd94e"/><path d="M14 30h15l-8 12h-8z" fill="#18a55c"/><path d="M28 28h14v14H21z" fill="#fdd94e"/></g><circle cx="21" cy="21" r="11" fill="#f4f4f4"/><circle cx="21" cy="21" r="8.300" fill="#3290f0"/><circle class="run" cx="20.500" cy="53.500" r="1.500"/></svg>
    <svg viewBox="0 0 42 42"><rect x="1" y="1" width="40" height="40" rx="9" fill="#222426" stroke="#eef3f3" stroke-width="1.700"/><circle cx="21" cy="17" r="12.500" fill="#b5c1ce"/><path d="M21 17L14 6.500a12.500 12.500 0 0114 0zM21 17l7 10.500a12.500 12.500 0 01-14 0z" fill="#dce4ea"/><circle cx="21" cy="17" r="3" fill="#d9e0e4" stroke="#8a98a5"/><rect x="11" y="32" width="20" height="5.500" fill="#ced2d4"/><path d="M15 35h12" stroke="#888" stroke-dasharray="2 .5"/></svg>
    <svg viewBox="0 0 42 42"><rect x="30" y="2" width="12" height="37" rx="6" fill="#ddd"/><path d="M38 13h4v8h-4z" fill="#22b6c4"/><path d="M38 21h4v9h-4z" fill="#3cbc68"/><path d="M38 30h4v4l-4 4z" fill="#e9a02c"/><rect width="39.500" height="42" rx="9" fill="url(#gCon)"/><path d="M4 2v38" stroke="#78552f"/><circle cx="21.500" cy="21" r="14.500" fill="none" stroke="#8f6a40" stroke-width="1.500"/><path d="M21.500 12c6 0 6 7 3 11 0 3 7 3 8 6-5 8-17 8-22 0 1-3 8-3 8-6-3-4-3-11 3-11z" fill="#8b673c"/></svg>
    <svg viewBox="0 0 42 42"><rect width="42" height="42" rx="10" fill="#fbfbf9"/><g stroke-width="1.200"><circle cx="9" cy="10.500" r="3" fill="#0a7bff"/><circle cx="9" cy="21" r="3" fill="#fb3c32"/><circle cx="9" cy="31.500" r="3" fill="#fb950a"/><circle cx="9" cy="10.500" r="4" fill="none" stroke="#7db8ff" stroke-width=".7"/><circle cx="9" cy="21" r="4" fill="none" stroke="#ff9b96" stroke-width=".7"/><circle cx="9" cy="31.500" r="4" fill="none" stroke="#ffc87a" stroke-width=".7"/><path d="M16 10.500h21M16 21h21M16 31.500h21" stroke="#c9c9c7"/></g></svg>
    <svg viewBox="0 0 42 42"><g clip-path="url(#round)"><path d="M0 0h42v42H0z" fill="#f3f2f4"/><path d="M0 0h42v10H0z" fill="#fbcc4b"/><path d="M0 10.500h42M0 19.500h42M0 30.500h42" stroke="#cbcbcd"/></g></svg>
    <svg viewBox="0 0 42 42"><rect width="42" height="42" rx="10" fill="url(#gTv)"/><svg x="3" y="12" width="17" height="18" color="#fff"><use href="#apple"/></svg><text x="18.500" y="28.500" class="tv">tv</text></svg>
    <svg viewBox="0 0 42 42"><rect x="-1" y="-1" width="44" height="44" rx="10" fill="url(#gMusic)"/><path d="M15 9l17-4v23.500c0 3-2 4.500-4.500 5s-4.500-1-4.500-3.500c0-3 2.500-4 6-4.500V14l-11.500 2.500V31c0 3-2 4.500-4.500 5s-4.500-1-4.500-3.500c0-3 3-4 6.500-4.500z" fill="#fceeee"/></svg>
    <svg viewBox="0 0 42 42"><rect width="42" height="42" rx="10" fill="url(#gPod)"/><g fill="none" stroke="#fff" stroke-width="1.900"><path d="M14.500 31.500a13 13 0 1113 0M16.500 26a8 8 0 119 0"/></g><circle cx="21" cy="19" r="3.700" fill="#fff"/><path d="M17.500 27c0-3.500 7-3.500 7 0l-1 8c-.4 2.500-4.600 2.500-5 0z" fill="#fff"/></svg>
    <svg viewBox="0 0 42 42"><rect width="42" height="42" rx="10" fill="url(#gStore)"/><path d="M23.500 10.500L13 28M18.500 10.500L31 33M8.500 27.500H25M29.500 27.500h4M11.500 31L10 33.500" stroke="#e8f4ff" stroke-width="3.600" stroke-linecap="round"/></svg>
    <svg viewBox="0 0 42 42"><rect width="42" height="42" rx="10" fill="url(#gSet)"/><circle cx="21" cy="21" r="18" fill="#3c3d3c"/><circle cx="21" cy="21" r="16" fill="none" stroke="#9c9e9b" stroke-width="2.500" stroke-dasharray="1.300 .7"/><g fill="none" stroke="#969894" stroke-width="2.500"><circle cx="21" cy="21" r="12.500"/><circle cx="21" cy="21" r="4.500"/><path d="M25.500 21H33M18.700 17L15 10.500M18.700 25L15 31.500"/></g></svg>
    <i class="sep"></i>
    <svg viewBox="0 0 42 42"><rect width="42" height="42" rx="10" fill="url(#gWhite)"/><path d="M28 6.500L36 10v23l-8 3.500L6 16.500l3-3 20 15.500V14L9 29.500l-3-3z" fill="url(#gCode)"/><circle class="run" cx="18.500" cy="53.500" r="1.500"/><circle class="run idle" cx="23" cy="53.500" r="1.500"/></svg>
    <svg viewBox="0 0 42 42"><rect width="42" height="42" rx="10" fill="url(#gTerm)"/><path d="M9.500 12.500l10 5.800-10 5.800" fill="none" stroke="#fff" stroke-width="2"/><path d="M21.500 24H33" stroke="#fff" stroke-width="2"/><circle class="run" cx="18.500" cy="53.500" r="1.500"/><circle class="run" cx="23" cy="53.500" r="1.500"/></svg>
    <svg viewBox="0 0 42 42"><g fill="#336791" stroke="#fff" stroke-width="1.500" stroke-linejoin="round"><path d="M13-1C4-4-3-1-2 9c1 9 4 19 9 22 4 1 6-4 8-8z"/><path d="M29-1c9-3 17-1 15 8-1 7-5 15-9 18 3 3 6 2 8 2-3 4-8 4-11 3l-3-7z"/><path d="M21-3C11-3 11 6 11 12c0 5-1 9 2 13 3 3 6 1 7 3 1 3 0 10 1 13 2 4 8 3 9 0 1-4-1-10 1-15 3-4 4-10 3-16C34 2 30-3 21-3z"/></g><path d="M16 9c3 2 3 7 2 12M32 10c-3 2-2 6-1 11M11 31c3 1 6 0 8-2" fill="none" stroke="#fff" stroke-width="1.500"/><circle cx="17" cy="11" r="1.200" fill="#fff"/><circle cx="30" cy="11" r="1.200" fill="#fff"/><circle class="run" cx="20.500" cy="53.500" r="1.500"/></svg>
    <svg viewBox="0 0 42 42"><rect width="42" height="42" rx="10" fill="#dadada"/><rect x="7" y="7" width="28" height="28" rx="5" fill="#f5f5f5"/><path d="M17 10.500h-4a2.500 2.500 0 00-2.500 2.500v4M25 10.500h4a2.500 2.500 0 012.500 2.500v4M17 31.500h-4a2.500 2.500 0 01-2.500-2.500v-4M25 31.500h4a2.500 2.500 0 002.500-2.500v-4" fill="none" stroke="#666" stroke-width="1.900"/><path d="M15 17.500h3l1-1.500h4l1 1.500h3V26H15z" fill="#5c5c5c"/><circle cx="21" cy="21.500" r="2.500" fill="#5c5c5c" stroke="#f5f5f5" stroke-width="1.200"/><circle class="run" cx="20.500" cy="53.500" r="1.500"/></svg>
    <i class="sep"></i>
    <svg viewBox="0 0 42 42"><path d="M0 9q0-2 2-2h9c3 0 3 4 6 4h23q2 0 2 2v10H0z" fill="#4596d0"/><rect y="12" width="42" height="30" rx="2" fill="url(#gFold)"/><circle cx="21" cy="26.500" r="9" fill="#4aa2da"/><path d="M21 21.500v9M17.500 27.500l3.500 3.500 3.500-3.500" fill="none" stroke="#7fcdf7" stroke-width="1.500"/></svg>
    <svg viewBox="0 0 42 42"><path d="M0 9q0-2 2-2h9c3 0 3 4 6 4h23q2 0 2 2v10H0z" fill="#4596d0"/><rect y="12" width="42" height="30" rx="2" fill="url(#gFold)"/><rect x="11" y="18" width="20" height="16" rx="1.500" fill="none" stroke="#4ea8de" stroke-width="1.200"/><path d="M11 19.500h20M13 32h16" stroke="#4ea8de" stroke-width="2.500"/></svg>
    <svg viewBox="0 0 42 42"><path d="M6 6l3-5 5 2 4-4 4 3 5-3 4 4 4-1 2 5-5 4H9z" fill="#d8d8d6"/><path d="M11 3l3 5M17 0l-1 6M25 1l3 6M31 2l-3 5M20 3l3 4" stroke="#666" stroke-width="1.500"/><path d="M4.500 6c4 4 29 4 33 0L33 41c-1 4-23 4-24 0z" fill="url(#gTrash)"/></svg>
  </div>
</footer>
</body>
</html>
```
FILE: styles.css
```css
* { box-sizing: border-box; }
html, body { margin: 0; height: 1080px; overflow: hidden; }
body { display: flex; flex-direction: column; background: #000026; font-family: "Noto Sans", sans-serif; font-size: 13px; color: #fff; }
svg { display: block; flex: none; overflow: visible; }
.defs { position: absolute; }

.menubar { height: 25px; display: flex; justify-content: space-between; background: linear-gradient(#041930, #141c31); }
.menus { display: grid; grid-template-columns: 34px 110px 37px 39.500px 45px 60px 46px 60px 50px; padding-left: 20px; line-height: 24px; align-items: start; white-space: nowrap; }
.menus b { letter-spacing: -.35px; }
.menus .apple { width: 17px; height: 19px; margin-top: 3px; margin-left: -1px; }
.tray { display: flex; width: 555px; line-height: 25px; white-space: nowrap; }
.trayicons { width: 250px; height: 24px; margin-right: -12px; }
.battery { width: 28px; height: 24px; }
.pct { width: 32px; margin-left: 8px; font-size: 14px; letter-spacing: -.4px; }
.clock { width: 161px; font-size: 15.500px; letter-spacing: .65px; }
.trayend { width: 88px; height: 24px; }

.tabstrip { height: 34px; border-top: 1px solid #4c4c4d; background: linear-gradient(#6d6d6d, #6d6d6d) bottom / 100% 1px no-repeat #373737; display: flex; align-items: center; }
.lights { width: 84.300px; padding-left: 17px; display: flex; gap: 8px; padding-bottom: 1px; }
.lights i { width: 14px; height: 14px; border-radius: 50%; }
.red { background: #ec5148; }
.amber { background: #f2ae1b; }
.green { background: #56c934; }
.tabs { display: grid; grid-template-columns: repeat(13, 101.050px) repeat(4, 100px); height: 33px; }
.tab { display: flex; align-items: center; padding-left: 11.500px; min-width: 0; position: relative; height: 32px; }
.tab > svg { width: 16px; height: 16px; position: relative; }
.tab span { position: relative; width: 37px; margin-left: 8px; overflow: hidden; white-space: nowrap; line-height: 19px; padding-bottom: 1px; font-size: 13px; color: #e6e6e6; -webkit-mask-image: linear-gradient(90deg, #000 50%, transparent); mask-image: linear-gradient(90deg, #000 50%, transparent); }
.tab svg.x { width: 10px; height: 10px; margin-left: 7.500px; }
.tab:nth-child(n+14) svg.x { margin-left: 6.500px; }
.tab:not(.active):not(.before)::after { content: ""; width: 1px; height: 20px; background: #6f6f6f; margin-left: auto; }
.tab > svg.shape { position: absolute; left: -9px; top: -1px; width: 118px; height: 34px; }
.plus { width: 14px; height: 14px; margin-left: 15px; }
.chev { width: 10px; height: 10px; margin-left: 66px; }

.toolbar { height: 39px; padding-bottom: 2px; background: #333; display: flex; align-items: center; }
.navicons { display: flex; gap: 16px; padding-left: 14px; width: 150px; }
.navicons svg, .exts svg { width: 16px; height: 16px; }
.info { width: 16px; height: 16px; }
.url { margin: 0 0 0 8px; flex: 1; color: #9c9c9c; font-size: 13px; letter-spacing: .65px; }
.url span { color: #e8e8e8; letter-spacing: .45px; }
.exts { display: flex; gap: 16px; height: 16px; padding-right: 14px; }
.exts span { width: 8px; margin-right: -16px; }
.exts .idm { width: 22px; height: 22px; margin-right: -6px; }

.bookmarks { height: 32px; background: #333; border-bottom: 1px solid #4c4c4c; display: flex; justify-content: space-between; }
.marks { display: grid; grid-template-columns: 93px 72px 72px 96px 103px 150px 76px 92px 32px 105px 123px 70px 152px 112px 82px 152px 47px 140px; padding-left: 14px; }
.marks a { display: flex; align-items: center; gap: 8px; height: 25px; white-space: nowrap; color: #d6d6d6; font-size: 12.750px; letter-spacing: .08px; line-height: 17px; }
.marks svg { width: 16px; height: 16px; }
.more { width: 10px; height: 8px; margin: 9px 18px 0 0; }

.page { height: 878px; background: #fff; color: #000; font-family: "Open Sans", sans-serif; flex: none; display: flex; flex-direction: column; }
.sitebar { height: 82px; flex: none; background: #ffc017; border-bottom: 2px solid #000; display: flex; align-items: center; justify-content: space-between; padding: 0 203px 0 375.500px; }
.logo { width: 170px; height: 30px; }
.logo text { font: bold 38px "Liberation Serif", serif; letter-spacing: -1px; }
.sitenav { display: flex; align-items: center; gap: 20px; font-size: 17.600px; -webkit-text-stroke: .6px currentColor; }
.cta { background: #000; color: #fff; height: 42px; line-height: 42px; width: 105px; text-align: center; border-radius: 20px; font-size: 16px; }
h1 { margin: 20px 0 0; height: 87px; line-height: 87px; text-align: center; font-size: 64px; font-weight: 400; }
.form { padding: 0 342px 0 384px; display: flex; flex-direction: column; gap: 20px; flex: 1; }
.form input { height: 77px; border: 1px solid #00f; border-radius: 25px; padding: 0 20px; font: 25.600px "Open Sans", sans-serif; background: #fff; }
.form input::placeholder { color: #757575; }
.form button { width: 1152px; height: 75px; border: 0; border-radius: 25px; padding: 0 0 0 1px; background: #ffc017; color: #000; font: 25.600px/75px "Open Sans", sans-serif; -webkit-text-stroke: .9px #000; }

.desk { height: 72px; background: linear-gradient(#15171c, #15171c) right top / 230px 8px no-repeat #000026; flex: none; }
.dock { width: 1506px; height: 68px; margin-left: 207px; padding: 0 16px 0 16.300px; border-radius: 17px; background: #282828; box-shadow: 0 0 18px rgba(0, 0, 0, .13); display: grid; grid-template-columns: repeat(20, 54px) 8.700px repeat(4, 54px) 7px repeat(3, 54px); align-items: center; justify-items: center; }
.dock > svg { width: 42px; height: 42px; }
.petals ellipse { mix-blend-mode: multiply; }
.sep { width: 1px; height: 44px; background: #666; }
.run { fill: #3f86f5; }
.idle { fill: #8a8a8a; }
.cal-m { font: 9.500px/1 "Open Sans", sans-serif; fill: #fff; text-anchor: middle; }
.cal-d { font: 300 26px/1 "Open Sans", sans-serif; fill: #333; text-anchor: middle; }
.tv { font: bold 19px "Open Sans", sans-serif; fill: #fff; }
```
